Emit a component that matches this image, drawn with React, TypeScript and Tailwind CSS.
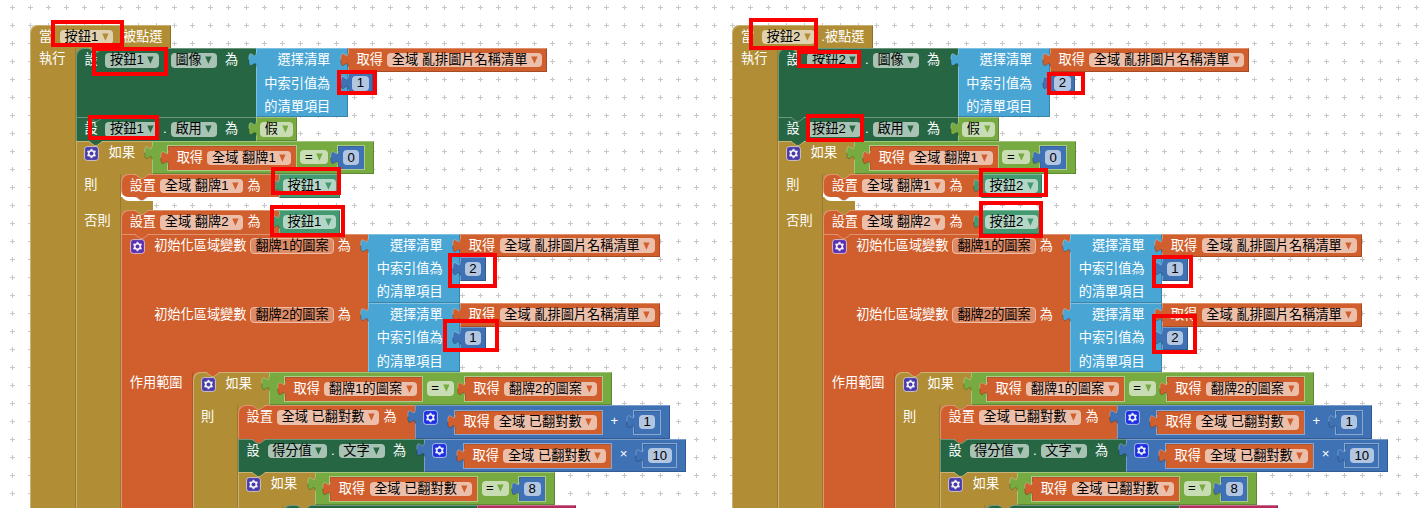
import React from "react";
import { clsx } from "clsx";

type Tone = "gold" | "forest" | "sky" | "orange" | "lime" | "navy" | "teal" | "pink";

const HEX: Record<Tone, string> = {
  gold: "#b18e35",
  forest: "#266643",
  sky: "#49a6d4",
  orange: "#d05f2d",
  lime: "#77ab41",
  navy: "#3f71b5",
  teal: "#439970",
  pink: "#b32d5e",
};

const BG: Record<Tone, string> = {
  gold: "bg-[#b18e35]",
  forest: "bg-[#266643]",
  sky: "bg-[#49a6d4]",
  orange: "bg-[#d05f2d]",
  lime: "bg-[#77ab41]",
  navy: "bg-[#3f71b5]",
  teal: "bg-[#439970]",
  pink: "bg-[#b32d5e]",
};

const BEVEL = "shadow-[inset_1px_1px_0_rgba(255,255,255,0.3),inset_-1px_-1px_0_rgba(0,0,0,0.2)]";
const HAT_EDGE = "shadow-[inset_1px_1px_0_rgba(255,255,255,0.3),inset_-1px_0_0_rgba(0,0,0,0.2)]";
const SOCKET = "shadow-[0_0_0_1px_rgba(255,255,255,0.38),inset_1px_1px_0_rgba(0,0,0,0.12)]";
const LEFT_EDGE = "shadow-[inset_1px_0_0_rgba(255,255,255,0.32),inset_-1px_0_0_rgba(0,0,0,0.13)]";
const TOP_LEFT_EDGE = "shadow-[inset_1px_1px_0_rgba(255,255,255,0.32)]";

/** Puzzle tab on the left edge of a value block. */
function Tab({ tone }: { tone: Tone }) {
  return (
    <svg className="absolute -left-2 top-[3.6px]" width="9" height="16" viewBox="0 0 9 16">
      <path d="M9 0.9H8C8 9.9 0.8 -6.3 0.8 7.65S8 5.4 8 14.4H9z" fill={HEX[tone]} />
      <path d="M8 0.9C8 9.9 0.8 -6.3 0.8 7.65" fill="none" stroke="#fff" strokeOpacity="0.3" strokeWidth="0.9" />
      <path d="M0.8 7.65C0.8 21.6 8 5.4 8 14.4" fill="none" stroke="#000" strokeOpacity="0.25" strokeWidth="0.9" />
    </svg>
  );
}

/** Bump of the block above, reaching into the top edge of the next one. */
function Notch({ tone, below }: { tone: Tone; below?: boolean }) {
  return (
    <svg className={clsx("absolute left-[13.5px]", below ? "top-full -mt-px" : "top-0")} width="14" height="6" viewBox="0 0 14 6">
      <path d="M0 0L5.4 4.1H8.1L13.5 0z" fill={HEX[tone]} />
      <path d="M0 0.5L5.4 4.4H8.1L13.5 0.5" fill="none" stroke={below ? "#000" : "#fff"} strokeOpacity={below ? 0.2 : 0.35} strokeWidth="0.9" />
    </svg>
  );
}

function Value({ tone, inset, className, children }: { tone: Tone; inset?: boolean; className?: string; children?: React.ReactNode }) {
  return (
    <div className={clsx("relative flex shrink-0", BG[tone], inset ? SOCKET : BEVEL, className)}>
      <Tab tone={tone} />
      {children}
    </div>
  );
}

/** The solid left part of a statement; `above` is the colour of the block it hangs from. */
function Statement({ tone, above, round, cap, className, children }: { tone: Tone; above: Tone; round?: boolean; cap?: boolean; className: string; children?: React.ReactNode }) {
  return (
    <div className={clsx("relative shrink-0", round && BG[above], cap && "bg-[linear-gradient(#b18e35_50%,#fff_50%)]")}>
      <div className={clsx("h-full", BG[tone], TOP_LEFT_EDGE, round && "rounded-tl-[7px]", cap && "rounded-bl-[7px]", className)}>
        {children}
      </div>
      <Notch tone={above} />
      {cap && <Notch tone={tone} below />}
    </div>
  );
}

function Line({ className, children }: { className?: string; children: React.ReactNode }) {
  return <div className={clsx("flex h-6 items-center", className)}>{children}</div>;
}

function Arrow({ tone }: { tone: Tone }) {
  return (
    <svg width="6.8" height="8" viewBox="0 0 7 8" className="shrink-0">
      <path d="M0.2 0.4H6.8L3.5 7.8z" fill={HEX[tone]} />
    </svg>
  );
}

/** Light pill holding an editable value, with a menu arrow when a tone is given. */
function Field({ tone, children }: { tone?: Tone; children: React.ReactNode }) {
  return (
    <span className="flex h-[14.6px] shrink-0 items-center gap-[3.6px] rounded-[4px] bg-white/60 px-[4.6px] leading-5 text-black">
      <span>{children}</span>
      {tone && <Arrow tone={tone} />}
    </span>
  );
}

function Gear({ color = "#4a3bab" }: { color?: string }) {
  return (
    <svg className="shrink-0" width="15" height="15" viewBox="0 0 15 15">
      <rect x="0.6" y="0.6" width="13.8" height="13.8" rx="2.6" fill={color} stroke="#fff" strokeOpacity="0.62" />
      <g fill="#fff" fillOpacity="0.85">
        <path d="M6.5 2.8h2v9.4h-2z" />
        <path d="M6.5 2.8h2v9.4h-2z" transform="rotate(60 7.5 7.5)" />
        <path d="M6.5 2.8h2v9.4h-2z" transform="rotate(120 7.5 7.5)" />
        <circle cx="7.5" cy="7.5" r="3.6" />
      </g>
      <circle cx="7.5" cy="7.5" r="2" fill={color} />
    </svg>
  );
}

function Getter({ inset, children }: { inset?: boolean; children: React.ReactNode }) {
  return (
    <Value tone="orange" inset={inset} className="h-[23.4px] items-center gap-[4.4px] pl-[8.8px] pr-[5px]">
      <span>取得</span>
      <Field tone="orange">{children}</Field>
    </Value>
  );
}

function Numeral({ inset, children }: { inset?: boolean; children: React.ReactNode }) {
  return (
    <Value tone="navy" inset={inset} className="h-[23.2px] items-center px-[4.6px]">
      <Field>{children}</Field>
    </Value>
  );
}

function Component({ name }: { name: string }) {
  return (
    <Value tone="teal" className="h-[23.6px] items-center px-[4.2px]">
      <Field tone="teal">{name}</Field>
    </Value>
  );
}

function SelectItem({ index }: { index: string }) {
  return (
    <div className="flex h-[69.1px] items-start">
      <Value tone="sky" className="h-full w-[91.7px] flex-col items-end pr-[17.4px] leading-[24px]">
        <span className="h-[23.2px]">選擇清單</span>
        <span className="h-[23.2px]">中索引值為</span>
        <span>的清單項目</span>
      </Value>
      <div className="flex flex-col items-start">
        <Getter>全域 亂排圖片名稱清單</Getter>
        <Numeral>{index}</Numeral>
      </div>
    </div>
  );
}

function Compare({ left, children }: { left: string; children: React.ReactNode }) {
  return (
    <Value tone="lime" className="h-[33px] items-start pl-[15.4px] pr-[10.2px] pt-[5.1px]">
      <Getter inset>{left}</Getter>
      <div className="ml-[4.6px] mr-[10.6px] flex h-[22px] items-center">
        <Field tone="lime">=</Field>
      </div>
      {children}
    </Value>
  );
}

function Arithmetic({ sign, operand }: { sign: string; operand: string }) {
  return (
    <Value tone="navy" className="h-full items-start pl-[8.7px] pr-[9.6px]">
      <Line className="pr-[16.4px]">
        <Gear color="#1b2fe0" />
      </Line>
      <div className="flex pt-[5.3px]">
        <Getter inset>全域 已翻對數</Getter>
        <span className="w-[32.6px] pl-[9px] leading-[20px]">{sign}</span>
        <Numeral inset>{operand}</Numeral>
      </div>
    </Value>
  );
}

function PropertyLine({ target, property }: { target: string; property: string }) {
  return (
    <Line className="pl-[8.5px]">
      <span>設</span>
      <span className="ml-[7.8px] flex items-center gap-[4.2px]">
        <Field tone="forest">{target}</Field>
        <span>.</span>
        <Field tone="forest">{property}</Field>
      </span>
      <span className="ml-[8.2px]">為</span>
    </Line>
  );
}

function SetLine({ children }: { children: React.ReactNode }) {
  return (
    <Line className="gap-[4.1px] pl-[8.4px]">
      <span>設置</span>
      <Field tone="orange">{children}</Field>
      <span>為</span>
    </Line>
  );
}

function IfHead({ above, round, left, children }: { above: Tone; round?: boolean; left: string; children: React.ReactNode }) {
  return (
    <div className="flex">
      <Statement tone="gold" above={above} round={round} className="w-[76.5px]">
        <Line className="gap-[9.4px] pl-[8.4px]">
          <Gear />
          <span>如果</span>
        </Line>
      </Statement>
      <Compare left={left}>{children}</Compare>
    </div>
  );
}

/** Gold spine carrying a clause caption, with the clause's statements beside it. */
function Clause({ caption, className, children }: { caption: string; className?: string; children: React.ReactNode }) {
  return (
    <div className="flex grow items-stretch">
      <div className={clsx("w-[45.3px] shrink-0 pl-[8.3px]", BG.gold, LEFT_EDGE, className)}>
        <Line>{caption}</Line>
      </div>
      <div className="flex flex-col">{children}</div>
    </div>
  );
}

function LocalVariable({ name, gear, index }: { name: string; gear?: boolean; index: string }) {
  const line = (
    <Line className="gap-[3.6px] pl-[8.3px]">
      <span className="flex w-[21px]">{gear && <Gear color="#5a2fb0" />}</span>
      <span>初始化區域變數</span>
      <span className="flex h-4 w-[84px] items-center justify-center rounded-[4px] border border-[#efbba5] bg-[#dd8a66] leading-5 text-black">
        {name}
      </span>
      <span>為</span>
    </Line>
  );
  return (
    <div className="flex">
      {gear ? (
        <Statement tone="orange" above="orange" className="w-[247.1px]">{line}</Statement>
      ) : (
        <div className={clsx("w-[247.1px] shrink-0", BG.orange, "shadow-[inset_1px_0_0_rgba(255,255,255,0.32)]")}>{line}</div>
      )}
      <SelectItem index={index} />
    </div>
  );
}

function ScoreCheck() {
  return (
    <>
      <IfHead above="forest" left="全域 已翻對數">
        <Numeral inset>8</Numeral>
      </IfHead>
      <Clause caption="">
        <div className="flex h-8">
          <Statement tone="forest" above="gold" round className="w-[194px]" />
          <Value tone="pink" className="w-[98.6px]" />
        </div>
      </Clause>
    </>
  );
}

function MatchCheck() {
  return (
    <div className="flex flex-col">
      <IfHead above="orange" round left="翻牌1的圖案">
        <Getter inset>翻牌2的圖案</Getter>
      </IfHead>
      <Clause caption="則">
        <div className="flex h-[33.6px]">
          <Statement tone="orange" above="gold" round className="w-[176.5px]">
            <SetLine>全域 已翻對數</SetLine>
          </Statement>
          <Arithmetic sign="+" operand="1" />
        </div>
        <div className="flex h-[33.4px]">
          <Statement tone="forest" above="orange" className="w-[185.6px]">
            <PropertyLine target="得分值" property="文字" />
          </Statement>
          <Arithmetic sign="×" operand="10" />
        </div>
        <ScoreCheck />
      </Clause>
    </div>
  );
}

type Mark = [left: number, top: number, right: number, bottom: number];

type ProgramProps = { button: string; indexes: [string, string, string]; marks: Mark[] };

function Program({ button, indexes, marks }: ProgramProps) {
  return (
    <section className="relative h-[508px] w-[702px] shrink-0 whitespace-pre pl-[30.3px] pt-[25.4px] leading-5 text-white">
      <div className={clsx("flex h-[23px] w-[140.7px] items-center rounded-tl-[7px] pl-[8.7px]", BG.gold, HAT_EDGE)}>
        <span>當</span>
        <span className="ml-[7.8px] mr-[6px]">
          <Field tone="gold">{button}</Field>
        </span>
        <span>.被點選</span>
      </div>
      <div className="flex">
        <div className={clsx("w-[45.7px] shrink-0 pl-[8.7px]", BG.gold, LEFT_EDGE)}>
          <Line className="-mt-px">執行</Line>
        </div>
        <div className="flex flex-col">
          <div className="flex">
            <Statement tone="forest" above="gold" round className="w-[180px]">
              <PropertyLine target={button} property="圖像" />
            </Statement>
            <SelectItem index={indexes[0]} />
          </div>
          <div className="flex h-[23.6px]">
            <Statement tone="forest" above="forest" className="w-[180px]">
              <PropertyLine target={button} property="啟用" />
            </Statement>
            <Value tone="lime" className="items-center px-[4.2px]">
              <Field tone="lime">假</Field>
            </Value>
          </div>

          <IfHead above="forest" left="全域 翻牌1">
            <Numeral inset>0</Numeral>
          </IfHead>
          <Clause caption="則" className="-mt-px">
            <div className="w-[31.3px] bg-[#b18e35]">
              <div className="flex h-[27.2px] w-[220px] items-start rounded-bl-[8px] bg-white">
                <div className="flex h-[23.4px]">
                  <Statement tone="orange" above="gold" round cap className="w-[157.5px]">
                    <SetLine>全域 翻牌1</SetLine>
                  </Statement>
                  <Component name={button} />
                </div>
              </div>
              <div className="h-[9.1px]" />
            </div>
          </Clause>
          <Clause caption="否則" className="-mt-px">
            <div className="flex h-[23.7px]">
              <Statement tone="orange" above="gold" round className="w-[157.5px]">
                <SetLine>全域 翻牌2</SetLine>
              </Statement>
              <Component name={button} />
            </div>
            <LocalVariable name="翻牌1的圖案" gear index={indexes[1]} />
            <LocalVariable name="翻牌2的圖案" index={indexes[2]} />
            <div className="flex">
              <div className={clsx("w-[71.5px] shrink-0 pl-[8.5px]", BG.orange, LEFT_EDGE)}>
                <Line className="-mt-px">作用範圍</Line>
              </div>
              <MatchCheck />
            </div>
          </Clause>
        </div>
      </div>

      {marks.map(([l, t, r, b]) => (
        <div key={`${l}-${t}`} className="absolute border-4 border-[#fb0000]" style={{ left: l, top: t, width: r - l, height: b - t }} />
      ))}
    </section>
  );
}

const LEFT_MARKS: Mark[] = [
  [51, 20, 124, 47],
  [92, 47, 168, 76],
  [88, 115, 159, 140],
  [337, 70, 377, 95],
  [271, 167, 341, 195],
  [270, 205, 345, 237],
  [448, 253, 497, 288],
  [443, 319, 499, 352],
];

const RIGHT_MARKS: Mark[] = [
  [47, 18, 116, 50],
  [95, 50, 159, 68],
  [104, 114, 162, 142],
  [345, 72, 383, 95],
  [277, 168, 346, 197],
  [277, 201, 341, 238],
  [450, 255, 491, 288],
  [450, 314, 495, 354],
];

function Grid() {
  return (
    <svg className="absolute inset-0" width="1428" height="508">
      <defs>
        <pattern id="grid" x="3" y="-2" width="18" height="18" patternUnits="userSpaceOnUse">
          <path d="M7 9.5H12M9.5 7V12" stroke="#c8c8c8" />
        </pattern>
      </defs>
      <rect width="1428" height="508" fill="url(#grid)" />
    </svg>
  );
}

export default function App() {
  return (
    <main className="relative flex h-[508px] w-[1428px] overflow-hidden bg-white font-['Liberation_Sans','Noto_Sans_CJK_TC',sans-serif] text-[13.2px]">
      <Grid />
      <Program button="按鈕1" indexes={["1", "2", "1"]} marks={LEFT_MARKS} />
      <Program button="按鈕2" indexes={["2", "1", "2"]} marks={RIGHT_MARKS} />
    </main>
  );
}
